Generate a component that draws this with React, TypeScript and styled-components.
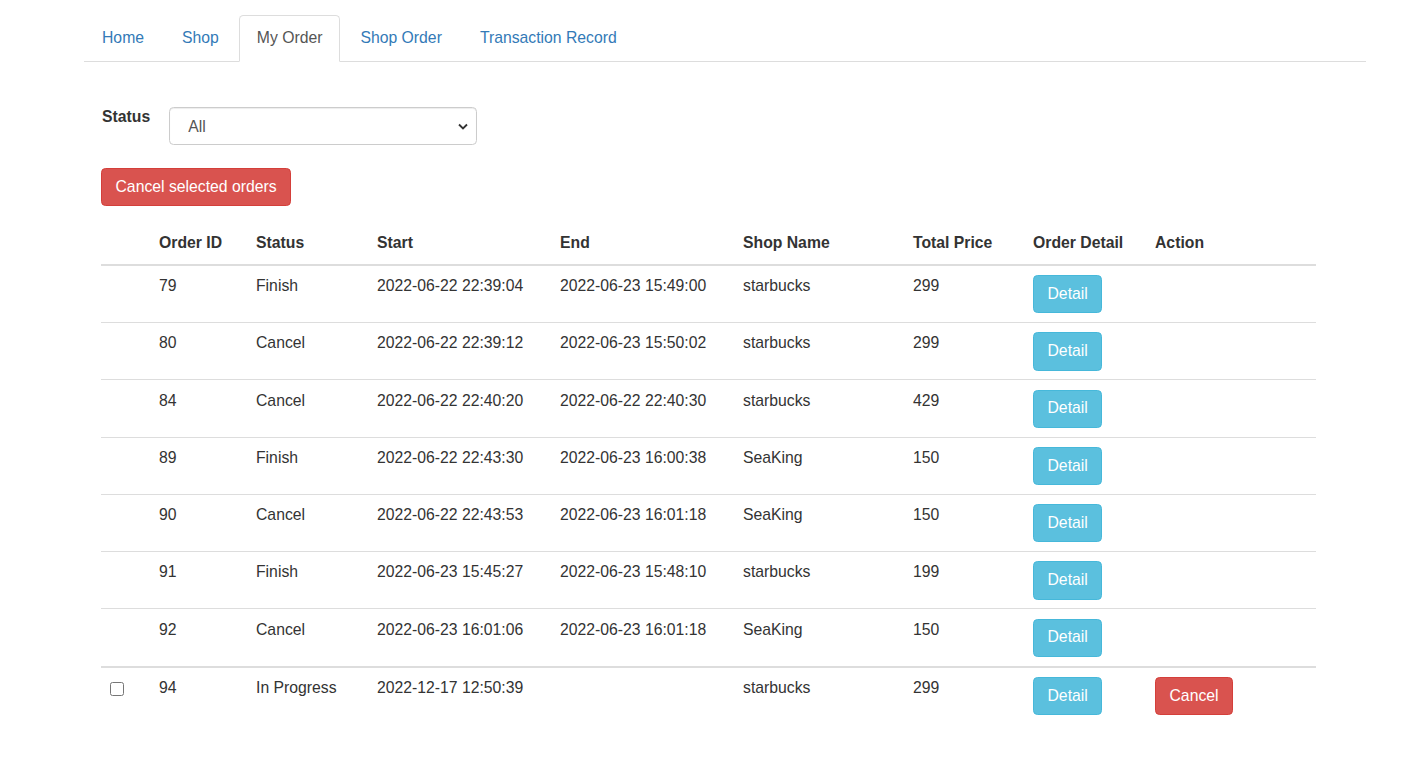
import React from "react";
import styled, { createGlobalStyle } from "styled-components";

const GlobalStyle = createGlobalStyle`
  html, body { margin: 0; padding: 0; background: #fff; }
  body {
    font-family: "Liberation Sans", Arial, Helvetica, sans-serif;
    font-size: 15.75px;
    line-height: 22.5px;
    color: #333;
  }
  * { box-sizing: border-box; }
`;

const Page = styled.div`
  padding: 15px 47px 40px 84px;
`;

const Tabs = styled.ul`
  display: flex;
  list-style: none;
  margin: 0;
  padding: 0;
  border-bottom: 1px solid #ddd;
`;

const TabItem = styled.li`
  margin-bottom: -1px;
  margin-right: 2px;
`;

const TabLink = styled.a<{ $active?: boolean }>`
  display: block;
  padding: 10.5px 17px 11.5px;
  line-height: 22.5px;
  border: 1px solid ${(p) => (p.$active ? "#ddd" : "transparent")};
  border-bottom-color: ${(p) => (p.$active ? "#fff" : "transparent")};
  border-radius: 4.5px 4.5px 0 0;
  background: ${(p) => (p.$active ? "#fff" : "transparent")};
  color: ${(p) => (p.$active ? "#555" : "#337ab7")};
  text-decoration: none;
  cursor: pointer;
`;

const Content = styled.div`
  padding: 45px 50px 0 17px;
`;

const FilterRow = styled.div`
  display: flex;
  align-items: flex-start;
  gap: 19px;
`;

const Label = styled.label`
  font-weight: bold;
  margin-top: -1px;
  margin-left: 1px;
`;

const SelectWrap = styled.div`
  position: relative;
  width: 308px;
`;

const Select = styled.select`
  display: block;
  width: 100%;
  height: 38.25px;
  padding: 7px 30px 5px 18px;
  font-family: inherit;
  font-size: 15.75px;
  color: #555;
  background: #fff;
  border: 1px solid #ccc;
  border-radius: 4.5px;
  box-shadow: inset 0 1px 1px rgba(0, 0, 0, 0.075);
  appearance: none;
  -webkit-appearance: none;
`;

const Chevron = styled.svg`
  position: absolute;
  right: 9px;
  top: 16px;
  width: 10px;
  height: 7px;
  pointer-events: none;
`;

const Btn = styled.button<{ $variant: "danger" | "info" }>`
  display: inline-block;
  height: 38.25px;
  padding: 0 13.5px;
  font-family: inherit;
  font-size: 15.75px;
  line-height: 22.5px;
  color: #fff;
  border-radius: 4.5px;
  border: 1px solid ${(p) => (p.$variant === "danger" ? "#d43f3a" : "#46b8da")};
  background: ${(p) => (p.$variant === "danger" ? "#d9534f" : "#5bc0de")};
  cursor: pointer;
`;

const ActionBar = styled.div`
  margin-top: 23.25px;
`;

const Table = styled.table`
  margin-top: 17.5px;
  width: 1215px;
  border-collapse: collapse;
  table-layout: fixed;
`;

const Th = styled.th`
  text-align: left;
  font-weight: bold;
  padding: 8.5px 9px 9px;
  vertical-align: bottom;
  border-bottom: 2px solid #ddd;
`;

const Td = styled.td`
  padding: 9.25px 9px 8.75px;
  vertical-align: top;
  border-top: 1px solid #ddd;
  white-space: nowrap;
`;

const Body = styled.tbody`
  & + & tr:first-child td {
    border-top: 2px solid #ddd;
  }
`;

const Check = styled.input`
  width: 14px;
  height: 14px;
  margin: 5px 0 0 0;
`;

type Order = {
  id: number;
  status: string;
  start: string;
  end: string;
  shop: string;
  price: number;
};

const done: Order[] = [
  { id: 79, status: "Finish", start: "2022-06-22 22:39:04", end: "2022-06-23 15:49:00", shop: "starbucks", price: 299 },
  { id: 80, status: "Cancel", start: "2022-06-22 22:39:12", end: "2022-06-23 15:50:02", shop: "starbucks", price: 299 },
  { id: 84, status: "Cancel", start: "2022-06-22 22:40:20", end: "2022-06-22 22:40:30", shop: "starbucks", price: 429 },
  { id: 89, status: "Finish", start: "2022-06-22 22:43:30", end: "2022-06-23 16:00:38", shop: "SeaKing", price: 150 },
  { id: 90, status: "Cancel", start: "2022-06-22 22:43:53", end: "2022-06-23 16:01:18", shop: "SeaKing", price: 150 },
  { id: 91, status: "Finish", start: "2022-06-23 15:45:27", end: "2022-06-23 15:48:10", shop: "starbucks", price: 199 },
  { id: 92, status: "Cancel", start: "2022-06-23 16:01:06", end: "2022-06-23 16:01:18", shop: "SeaKing", price: 150 },
];

const pending: Order[] = [
  { id: 94, status: "In Progress", start: "2022-12-17 12:50:39", end: "", shop: "starbucks", price: 299 },
];

const widths = [49, 97, 121, 183, 183, 170, 120, 122, 170];

const Row = ({ o, selectable }: { o: Order; selectable?: boolean }) => (
  <tr>
    <Td>{selectable && <Check type="checkbox" />}</Td>
    <Td>{o.id}</Td>
    <Td>{o.status}</Td>
    <Td>{o.start}</Td>
    <Td>{o.end}</Td>
    <Td>{o.shop}</Td>
    <Td>{o.price}</Td>
    <Td>
      <Btn $variant="info">Detail</Btn>
    </Td>
    <Td>{selectable && <Btn $variant="danger">Cancel</Btn>}</Td>
  </tr>
);

export default function App() {
  const tabs = ["Home", "Shop", "My Order", "Shop Order", "Transaction Record"];
  return (
    <>
      <GlobalStyle />
      <Page>
        <Tabs>
          {tabs.map((t) => (
            <TabItem key={t}>
              <TabLink $active={t === "My Order"}>{t}</TabLink>
            </TabItem>
          ))}
        </Tabs>
        <Content>
          <FilterRow>
            <Label>Status</Label>
            <SelectWrap>
              <Select defaultValue="all">
                <option value="all">All</option>
                <option value="progress">In Progress</option>
                <option value="finish">Finish</option>
                <option value="cancel">Cancel</option>
              </Select>
              <Chevron viewBox="0 0 10 7">
                <path d="M1 1.5 L5 5.5 L9 1.5" fill="none" stroke="#333" strokeWidth="1.8" />
              </Chevron>
            </SelectWrap>
          </FilterRow>
          <ActionBar>
            <Btn $variant="danger">Cancel selected orders</Btn>
          </ActionBar>
          <Table>
            <colgroup>
              {widths.map((w, i) => (
                <col key={i} style={{ width: w }} />
              ))}
            </colgroup>
            <thead>
              <tr>
                <Th></Th>
                <Th>Order ID</Th>
                <Th>Status</Th>
                <Th>Start</Th>
                <Th>End</Th>
                <Th>Shop Name</Th>
                <Th>Total Price</Th>
                <Th>Order Detail</Th>
                <Th>Action</Th>
              </tr>
            </thead>
            <Body>
              {done.map((o) => (
                <Row key={o.id} o={o} />
              ))}
            </Body>
            <Body>
              {pending.map((o) => (
                <Row key={o.id} o={o} selectable />
              ))}
            </Body>
          </Table>
        </Content>
      </Page>
    </>
  );
}
